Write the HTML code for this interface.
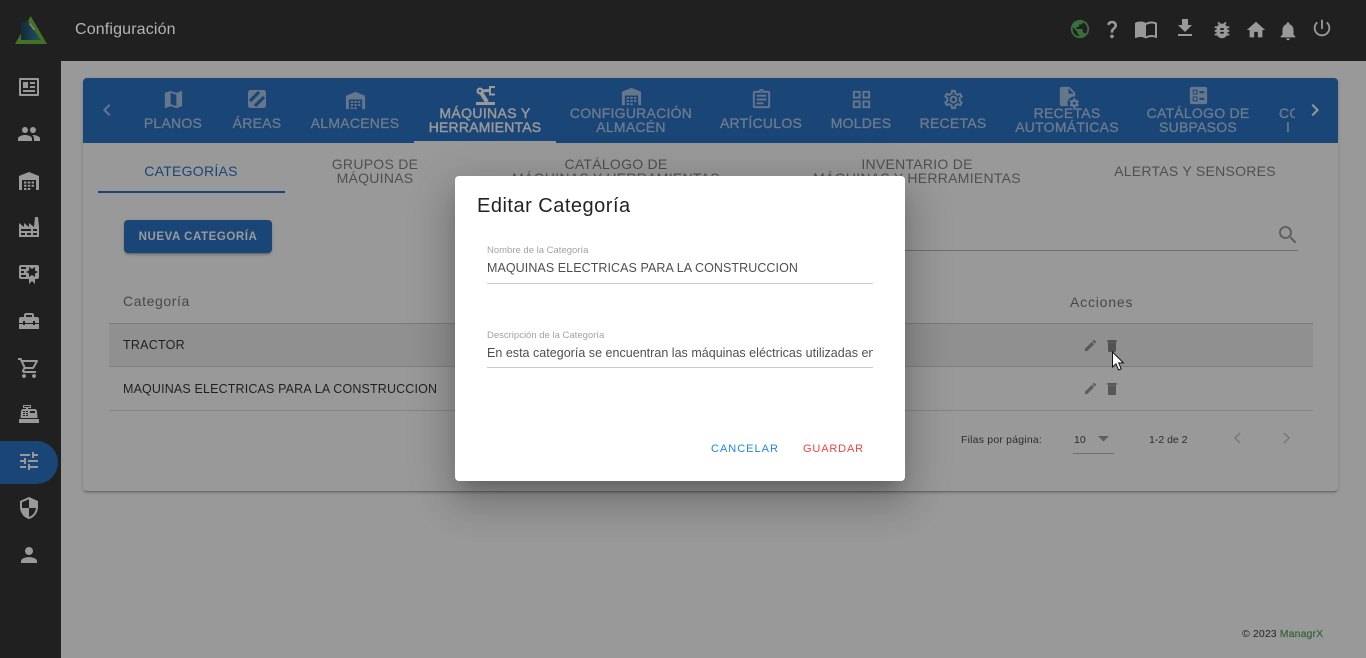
<!DOCTYPE html>
<html lang="es"><head><meta charset="utf-8"><title>Configuración</title>
<style>
*{box-sizing:border-box}
html,body{margin:0;padding:0;width:1366px;height:658px;overflow:hidden;background:#fff;font-family:"Liberation Sans",sans-serif}
.t{position:absolute;white-space:nowrap;line-height:14px}
.c{transform:translateX(-50%);text-align:center}
svg{position:absolute;display:block}
.tab{color:rgba(255,255,255,.6);font-size:14px;letter-spacing:.25px;font-weight:400;-webkit-text-stroke:.25px currentColor}
.sub{color:rgba(0,0,0,.54);font-size:14px;letter-spacing:.27px}
.w{fill:#fff}
.wt{fill:rgba(255,255,255,.6)}
.g{fill:rgba(0,0,0,.42)}
.d{fill:rgba(0,0,0,.48)}
</style></head><body>
<div style="position:absolute;left:0;top:0;width:1366px;height:61px;background:#212121"></div>
<div style="position:absolute;left:0;top:0;width:61px;height:658px;background:#212121"></div>

<svg style="left:14px;top:15px" width="34" height="30" viewBox="0 0 34 30"><defs><linearGradient id="lg" x1="0" y1="0" x2="1" y2="0"><stop offset="0" stop-color="#0a2f4e"/><stop offset="1" stop-color="#1d8296"/></linearGradient></defs><path d="M16.7 1 33 29H1z" fill="#62b52b"/><path d="M7 7.5 14 6 27 25H7z" fill="url(#lg)"/><path d="M16 8l5 6.5-1 1-5-6.500z" fill="#ddd"/></svg>

<svg class="w" style="left:1069px;top:18px;fill:#4caf50" width="22" height="22" viewBox="0 0 24 24"><path d="M12 2C6.48 2 2 6.48 2 12s4.48 10 10 10 10-4.48 10-10S17.52 2 12 2zm-1 17.93c-3.95-.49-7-3.85-7-7.93 0-.62.08-1.21.21-1.79L9 15v1c0 1.1.9 2 2 2v1.93zm6.9-2.54c-.26-.81-1-1.39-1.9-1.39h-1v-3c0-.55-.45-1-1-1H8v-2h2c.55 0 1-.45 1-1V7h2c1.1 0 2-.9 2-2v-.41c2.93 1.19 5 4.06 5 7.41 0 2.08-.8 3.97-2.1 5.39z"/></svg>
<svg class="w" style="left:1101px;top:18px" width="22" height="22" viewBox="0 0 24 24"><path d="M11.07 12.85c.77-1.39 2.25-2.21 3.11-3.44.91-1.29.4-3.7-2.18-3.7-1.69 0-2.52 1.28-2.87 2.34L6.54 6.96C7.25 4.83 9.18 3 11.99 3c2.35 0 3.96 1.07 4.78 2.41.7 1.15 1.11 3.3.03 4.9-1.2 1.77-2.35 2.31-2.97 3.45-.25.46-.35.76-.35 2.24h-2.89c-.01-.78-.13-2.05.48-3.15zM14 20c0 1.1-.9 2-2 2s-2-.9-2-2 .9-2 2-2 2 .9 2 2z"/></svg>
<svg class="w" style="left:1134px;top:17px" width="24" height="24" viewBox="0 0 24 24"><path d="M12,21.5C10.65,20.65 8.2,20 6.5,20C4.85,20 3.15,20.3 1.75,21.05C1.65,21.1 1.6,21.1 1.5,21.1C1.25,21.1 1,20.85 1,20.6V6C1.6,5.55 2.25,5.25 3,5C4.11,4.65 5.33,4.5 6.5,4.5C8.45,4.5 10.55,4.9 12,6C13.45,4.9 15.55,4.5 17.5,4.5C18.67,4.5 19.89,4.65 21,5C21.75,5.25 22.4,5.55 23,6V20.6C23,20.85 22.75,21.1 22.5,21.1C22.4,21.1 22.35,21.1 22.25,21.05C20.85,20.3 19.15,20 17.5,20C15.8,20 13.35,20.65 12,21.5M12,8V19.5C13.35,18.65 15.8,18 17.5,18C18.7,18 19.9,18.15 21,18.5V7C19.9,6.65 18.7,6.5 17.5,6.5C15.8,6.5 13.35,7.15 12,8Z"/></svg>
<svg class="w" style="left:1173px;top:16px" width="24" height="24" viewBox="0 0 24 24"><path d="M19 9h-4V3H9v6H5l7 7 7-7zM5 18v2h14v-2H5z"/></svg>
<svg class="w" style="left:1211px;top:19px" width="22" height="22" viewBox="0 0 24 24"><path d="M20 8h-2.81c-.45-.78-1.07-1.45-1.82-1.96L17 4.41 15.59 3l-2.17 2.17C12.96 5.06 12.49 5 12 5c-.49 0-.96.06-1.41.17L8.41 3 7 4.41l1.62 1.63C7.88 6.55 7.26 7.22 6.81 8H4v2h2.09c-.05.33-.09.66-.09 1v1H4v2h2v1c0 .34.04.67.09 1H4v2h2.81c1.04 1.79 2.97 3 5.19 3s4.15-1.21 5.19-3H20v-2h-2.09c.05-.33.09-.66.09-1v-1h2v-2h-2v-1c0-.34-.04-.67-.09-1H20V8zm-6 8h-4v-2h4v2zm0-4h-4v-2h4v2z"/></svg>
<svg class="w" style="left:1245px;top:19px" width="22" height="22" viewBox="0 0 24 24"><path d="M10 20v-6h4v6h5v-8h3L12 3 2 12h3v8z"/></svg>
<svg class="w" style="left:1277px;top:20px" width="22" height="22" viewBox="0 0 24 24"><path d="M12 22c1.1 0 2-.9 2-2h-4c0 1.1.89 2 2 2zm6-6v-5c0-3.07-1.64-5.64-4.5-6.32V4c0-.83-.67-1.5-1.5-1.5s-1.5.67-1.5 1.5v.68C7.63 5.36 6 7.92 6 11v5l-2 2v1h16v-1l-2-2z"/></svg>
<svg class="w" style="left:1311px;top:17px" width="22" height="22" viewBox="0 0 24 24"><path d="M13 3h-2v10h2V3zm4.83 2.17l-1.42 1.42C17.99 7.86 19 9.81 19 12c0 3.87-3.13 7-7 7s-7-3.13-7-7c0-2.19 1.01-4.14 2.58-5.42L6.17 5.17C4.23 6.82 3 9.26 3 12c0 4.97 4.03 9 9 9s9-4.03 9-9c0-2.74-1.23-5.18-3.17-6.83z"/></svg>

<div style="position:absolute;left:0;top:441px;width:58px;height:43px;background:#1565c0;border-radius:0 22px 22px 0"></div>
<svg class="w" style="left:17px;top:75px" width="24" height="24" viewBox="0 0 24 24"><path fill-rule="evenodd" d="M3 3h18a1 1 0 0 1 1 1v16a1 1 0 0 1-1 1H3a1 1 0 0 1-1-1V4a1 1 0 0 1 1-1zm1 2v14h16V5H4zm2 2h5v6H6V7zm7 0h5v2h-5V7zm0 4h5v2h-5v-2zm-7 4h12v2H6v-2z"/></svg>
<svg class="w" style="left:17px;top:122px" width="24" height="24" viewBox="0 0 24 24"><path d="M16 11c1.66 0 2.99-1.34 2.99-3S17.66 5 16 5c-1.66 0-3 1.34-3 3s1.34 3 3 3zm-8 0c1.66 0 2.99-1.34 2.99-3S9.66 5 8 5C6.34 5 5 6.34 5 8s1.34 3 3 3zm0 2c-2.33 0-7 1.17-7 3.5V19h14v-2.500c0-2.33-4.67-3.5-7-3.5zm8 0c-.29 0-.62.02-.97.05 1.16.84 1.97 1.97 1.97 3.45V19h6v-2.500c0-2.33-4.67-3.5-7-3.5z"/></svg>
<svg class="w" style="left:17px;top:169px" width="24" height="24" viewBox="0 0 24 24"><path d="M12 3 2 7v14h3V11h14v10h3V7zM7 12.500h2.500v2H7zM10.800 12.500h2.500v2h-2.500zM14.600 12.500H17v2h-2.400zM7 15.800h2.500v2H7zM10.800 15.800h2.500v2h-2.500zM14.600 15.800H17v2h-2.400zM7 19h2.500v2H7zM10.800 19h2.500v2h-2.500z"/></svg>
<svg class="w" style="left:17px;top:215px" width="24" height="24" viewBox="0 0 24 24"><path d="M4,18V20H8V18H4M4,14V16H14V14H4M10,18V20H14V18H10M16,14V16H20V14H16M16,18V20H20V18H16M2,22V8L7,12V8L12,12V8L17,12L18,2H21L22,12V22H2Z"/></svg>
<svg class="w" style="left:17px;top:262px" width="24" height="24" viewBox="0 0 24 24"><path d="M4,3C2.89,3 2,3.89 2,5V15A2,2 0 0,0 4,17H12V22L15,19L18,22V17H20A2,2 0 0,0 22,15V8L22,6V5A2,2 0 0,0 20,3H16V3H4M12,5L15,7L18,5V8.5L21,10L18,11.5V15L15,13L12,15V11.5L9,10L12,8.5V5M4,5H9V7H4V5M4,9H7V11H4V9M4,13H9V15H4V13Z"/></svg>
<svg class="w" style="left:17px;top:309px" width="24" height="24" viewBox="0 0 24 24"><path d="M18 16H16V15H8V16H6V15H2V20H22V15H18V16M20 8H17V6C17 4.9 16.1 4 15 4H9C7.9 4 7 4.9 7 6V8H4C2.9 8 2 8.9 2 10V14H6V12H8V14H16V12H18V14H22V10C22 8.9 21.1 8 20 8M15 8H9V6H15V8Z"/></svg>
<svg class="w" style="left:17px;top:356px" width="24" height="24" viewBox="0 0 24 24"><path d="M15.55 13c.75 0 1.41-.41 1.75-1.03l3.58-6.49c.37-.66-.11-1.48-.87-1.48H5.21l-.94-2H1v2h2l3.6 7.59-1.35 2.44C4.52 15.37 5.48 17 7 17h12v-2H7l1.1-2h7.45zM6.16 6h12.15l-2.76 5H8.53L6.16 6zM7 18c-1.1 0-1.99.9-1.99 2S5.9 22 7 22s2-.9 2-2-.9-2-2-2zm10 0c-1.1 0-1.99.9-1.99 2s.89 2 1.99 2 2-.9 2-2-.9-2-2-2z"/></svg>
<svg class="w" style="left:17px;top:402px" width="24" height="24" viewBox="0 0 24 24"><path d="M2,17H22V21H2V17M6.25,7H9V6H6V3H14V6H11V7H17.8C18.8,7 19.8,8 20,9L20.5,16H3.5L4.05,9C4.05,8 5.05,7 6.25,7M13,9V11H18V9H13M6,9V10H8V9H6M9,9V10H11V9H9M6,11V12H8V11H6M9,11V12H11V11H9M6,13V14H8V13H6M9,13V14H11V13H9M7,4V5H13V4H7Z"/></svg>
<svg class="w" style="left:17px;top:449px" width="24" height="24" viewBox="0 0 24 24"><path d="M3 17v2h6v-2H3zM3 5v2h10V5H3zm10 16v-2h8v-2h-8v-2h-2v6h2zM7 9v2H3v2h4v2h2V9H7zm14 4v-2H11v2h10zm-6-4h2V7h4V5h-4V3h-2v6z"/></svg>
<svg class="w" style="left:17px;top:496px" width="24" height="24" viewBox="0 0 24 24"><path d="M12 1L3 5v6c0 5.55 3.84 10.74 9 12 5.16-1.26 9-6.45 9-12V5l-9-4zm0 10.99h7c-.53 4.12-3.28 7.79-7 8.94V12H5V6.3l7-3.11v8.8z"/></svg>
<svg class="w" style="left:17px;top:543px" width="24" height="24" viewBox="0 0 24 24"><path d="M12 12c2.21 0 4-1.79 4-4s-1.79-4-4-4-4 1.79-4 4 1.79 4 4 4zm0 2c-2.67 0-8 1.34-8 4v2h16v-2c0-2.66-5.33-4-8-4z"/></svg>

<!-- card -->
<div style="position:absolute;left:83px;top:78px;width:1255px;height:413px;background:#fff;border-radius:4px;box-shadow:0 3px 1px -2px rgba(0,0,0,.2),0 2px 2px 0 rgba(0,0,0,.14),0 1px 5px 0 rgba(0,0,0,.12)"></div>
<div style="position:absolute;left:83px;top:78px;width:1255px;height:65px;background:#1565c0;border-radius:4px 4px 0 0"></div>
<svg class="wt" style="left:95px;top:98px" width="24" height="24" viewBox="0 0 24 24"><path d="M15.41 7.41L14 6l-6 6 6 6 1.41-1.41L10.83 12z"/></svg>
<svg class="w" style="left:1303px;top:98px" width="24" height="24" viewBox="0 0 24 24"><path d="M10 6L8.59 7.41 13.17 12l-4.58 4.59L10 18l6-6z"/></svg>

<svg class="wt" style="left:162px;top:88px" width="23" height="23" viewBox="0 0 24 24"><path d="M20.5 3l-.16.03L15 5.1 9 3 3.36 4.9c-.21.07-.36.25-.36.48V20.5c0 .28.22.5.5.5l.16-.03L9 18.9l6 2.1 5.64-1.9c.21-.07.36-.25.36-.48V3.5c0-.28-.22-.5-.5-.5zM15 19l-6-2.11V5l6 2.11V19z"/></svg>
<div class="t c tab" style="left:173px;top:116px">PLANOS</div>
<svg style="left:245px;top:87px" width="24" height="24" viewBox="0 0 24 24"><rect x="3" y="3" width="18" height="18" rx="2.500" fill="#a1c1e6"/><path d="M5 14 14 5M10 19 19 10" stroke="#1565c0" stroke-width="3.200" fill="none"/></svg>
<div class="t c tab" style="left:257px;top:116px">ÁREAS</div>
<svg class="wt" style="left:344px;top:89px" width="23" height="23" viewBox="0 0 24 24"><path d="M12 3 2 7v14h3V11h14v10h3V7zM7 12.500h2.500v2H7zM10.800 12.500h2.500v2h-2.500zM14.600 12.500H17v2h-2.400zM7 15.800h2.500v2H7zM10.800 15.800h2.500v2h-2.500zM14.600 15.800H17v2h-2.400zM7 19h2.500v2H7zM10.800 19h2.500v2h-2.500z"/></svg>
<div class="t c tab" style="left:355px;top:116px">ALMACENES</div>

<svg style="left:475px;top:85px" width="21" height="21" viewBox="0 0 21 21"><path d="M1 17h19v3H1z" fill="#fff"/><path d="M5 6 12 17" stroke="#fff" stroke-width="4" fill="none"/><path d="M5 6 14 5.500" stroke="#fff" stroke-width="3" fill="none"/><circle cx="5" cy="6" r="3.500" fill="#fff"/><circle cx="5" cy="6" r="1.200" fill="#1565c0"/><path d="M20 2h-5v7.500h5" stroke="#fff" stroke-width="2" fill="none"/></svg>
<div class="t c tab" style="left:485px;top:106px;color:#fff;-webkit-text-stroke:.4px currentColor;letter-spacing:.35px">MÁQUINAS Y</div>
<div class="t c tab" style="left:485px;top:120px;color:#fff;-webkit-text-stroke:.4px currentColor;letter-spacing:.2px">HERRAMIENTAS</div>
<div style="position:absolute;left:414px;top:141px;width:142px;height:2px;background:#fff"></div>

<svg class="wt" style="left:620px;top:85px" width="23" height="23" viewBox="0 0 24 24"><path d="M12 3 2 7v14h3V11h14v10h3V7zM7 12.500h2.500v2H7zM10.800 12.500h2.500v2h-2.500zM14.600 12.500H17v2h-2.400zM7 15.800h2.500v2H7zM10.800 15.800h2.500v2h-2.500zM14.600 15.800H17v2h-2.400zM7 19h2.500v2H7zM10.800 19h2.500v2h-2.500z"/></svg>
<div class="t c tab" style="left:631px;top:106px">CONFIGURACIÓN</div>
<div class="t c tab" style="left:631px;top:120px">ALMACÉN</div>
<svg class="wt" style="left:750px;top:88px" width="23" height="23" viewBox="0 0 24 24"><path d="M7 15h7v2H7zm0-4h10v2H7zm0-4h10v2H7zm12-4h-4.18C14.4 1.84 13.3 1 12 1c-1.3 0-2.4.84-2.82 2H5c-.14 0-.27.01-.4.04-.39.08-.74.28-1.01.55-.18.18-.33.4-.43.64-.1.23-.16.49-.16.77v14c0 .27.06.54.16.78s.25.45.43.64c.27.27.62.47 1.01.55.13.02.26.03.4.03h14c1.1 0 2-.9 2-2V5c0-1.1-.9-2-2-2zm-7-.25c.41 0 .75.34.75.75s-.34.75-.75.75-.75-.34-.75-.75.34-.75.75-.75zM19 19H5V5h14v14z"/></svg>
<div class="t c tab" style="left:761px;top:116px">ARTÍCULOS</div>
<svg class="wt" style="left:850px;top:88px" width="23" height="23" viewBox="0 0 24 24"><path d="M3 3v8h8V3H3zm6 6H5V5h4v4zm-6 4v8h8v-8H3zm6 6H5v-4h4v4zm4-16v8h8V3h-8zm6 6h-4V5h4v4zm-6 4v8h8v-8h-8zm6 6h-4v-4h4v4z"/></svg>
<div class="t c tab" style="left:861px;top:116px">MOLDES</div>
<svg class="wt" style="left:942px;top:88px" width="23" height="23" viewBox="0 0 24 24"><path fill-rule="evenodd" d="M19.43 12.98c.04-.32.07-.64.07-.98 0-.34-.03-.66-.07-.98l2.11-1.65c.19-.15.24-.42.12-.64l-2-3.46c-.09-.16-.26-.25-.44-.25-.06 0-.12.01-.17.03l-2.49 1c-.52-.4-1.08-.73-1.69-.98l-.38-2.65C14.46 2.18 14.25 2 14 2h-4c-.25 0-.46.18-.49.42l-.38 2.65c-.61.25-1.17.59-1.69.98l-2.49-1c-.06-.02-.12-.03-.18-.03-.17 0-.34.09-.43.25l-2 3.46c-.13.22-.07.49.12.64l2.11 1.65c-.04.32-.07.65-.07.98 0 .33.03.66.07.98l-2.11 1.65c-.19.15-.24.42-.12.64l2 3.46c.09.16.26.25.44.25.06 0 .12-.01.17-.03l2.49-1c.52.4 1.08.73 1.69.98l.38 2.65c.03.24.24.42.49.42h4c.25 0 .46-.18.49-.42l.38-2.65c.61-.25 1.17-.59 1.69-.98l2.49 1c.06.02.12.03.18.03.17 0 .34-.09.43-.25l2-3.46c.12-.22.07-.49-.12-.64l-2.11-1.65zm-1.98-1.71c.04.31.05.52.05.73 0 .21-.02.43-.05.73l-.14 1.13.89.7 1.08.84-.7 1.21-1.27-.51-1.04-.42-.9.68c-.43.32-.84.56-1.25.73l-1.06.43-.16 1.13-.2 1.35h-1.4l-.19-1.35-.16-1.13-1.06-.43c-.43-.18-.83-.41-1.23-.71l-.91-.7-1.06.43-1.27.51-.7-1.21 1.08-.84.89-.7-.14-1.13c-.03-.31-.05-.54-.05-.74s.02-.43.05-.73l.14-1.13-.89-.7-1.08-.84.7-1.21 1.27.51 1.04.42.9-.68c.43-.32.84-.56 1.25-.73l1.06-.43.16-1.13.2-1.35h1.39l.19 1.35.16 1.13 1.06.43c.43.18.83.41 1.23.71l.91.7 1.06-.43 1.27-.51.7 1.21-1.07.85-.89.7.14 1.13zM12 8c-2.21 0-4 1.79-4 4s1.79 4 4 4 4-1.79 4-4-1.79-4-4-4zm0 6c-1.1 0-2-.9-2-2s.9-2 2-2 2 .9 2 2-.9 2-2 2z"/></svg>
<div class="t c tab" style="left:953px;top:116px">RECETAS</div>
<svg class="wt" style="left:1056px;top:85px" width="23" height="23" viewBox="0 0 24 24"><path d="M6 2C4.89 2 4 2.9 4 4V20A2 2 0 0 0 6 22H12.68A7 7 0 0 1 12 19A7 7 0 0 1 19 12A7 7 0 0 1 20 12.08V8L14 2H6M13 3.5L18.5 9H13V3.5M18 14C17.87 14 17.76 14.09 17.74 14.21L17.55 15.53C17.25 15.66 16.96 15.82 16.7 16L15.46 15.5C15.35 15.5 15.22 15.5 15.15 15.63L14.15 17.36C14.09 17.47 14.11 17.6 14.21 17.68L15.27 18.5C15.25 18.67 15.24 18.83 15.24 19C15.24 19.17 15.25 19.33 15.27 19.5L14.21 20.32C14.12 20.4 14.09 20.53 14.15 20.64L15.15 22.37C15.21 22.5 15.34 22.5 15.46 22.5L16.7 22C16.96 22.18 17.24 22.35 17.55 22.47L17.74 23.79C17.76 23.91 17.86 24 18 24H20C20.11 24 20.22 23.91 20.24 23.79L20.43 22.47C20.73 22.34 21 22.18 21.27 22L22.5 22.5C22.63 22.5 22.76 22.5 22.83 22.37L23.83 20.64C23.89 20.53 23.86 20.4 23.77 20.32L22.7 19.5C22.72 19.33 22.74 19.17 22.74 19C22.74 18.83 22.73 18.67 22.7 18.5L23.76 17.68C23.85 17.6 23.88 17.47 23.82 17.36L22.82 15.63C22.76 15.5 22.63 15.5 22.5 15.5L21.27 16C21 15.82 20.73 15.65 20.42 15.53L20.23 14.21C20.22 14.09 20.11 14 20 14H18M19 17.5C19.83 17.5 20.5 18.17 20.5 19C20.5 19.83 19.83 20.5 19 20.5C18.16 20.5 17.5 19.83 17.5 19C17.5 18.17 18.17 17.5 19 17.5Z"/></svg>
<div class="t c tab" style="left:1067px;top:106px">RECETAS</div>
<div class="t c tab" style="left:1067px;top:120px">AUTOMÁTICAS</div>
<svg class="wt" style="left:1187px;top:84px" width="23" height="23" viewBox="0 0 24 24"><path fill-rule="evenodd" d="M13 9.5h5v-2h-5v2zm0 7h5v-2h-5v2zm6 4.5H5c-1.1 0-2-.9-2-2V5c0-1.1.9-2 2-2h14c1.1 0 2 .9 2 2v14c0 1.1-.9 2-2 2zM6 11h5V6H6v5zm1-4h3v3H7V7zM6 18h5v-5H6v5zm1-4h3v3H7v-3z"/></svg>
<div class="t c tab" style="left:1198px;top:106px">CATÁLOGO DE</div>
<div class="t c tab" style="left:1198px;top:120px">SUBPASOS</div>
<div class="t tab" style="left:1279px;top:106px;width:16px;overflow:hidden">CONFIG</div>
<div class="t tab" style="left:1286px;top:120px;width:5px;overflow:hidden">ID</div>

<!-- sub tabs -->
<div class="t c sub" style="left:191px;top:164px;color:#1565c0">CATEGORÍAS</div>
<div style="position:absolute;left:98px;top:191px;width:187px;height:2px;background:#1565c0"></div>
<div class="t c sub" style="left:375px;top:157px">GRUPOS DE</div>
<div class="t c sub" style="left:375px;top:171px">MÁQUINAS</div>
<div class="t c sub" style="left:616px;top:157px">CATÁLOGO DE</div>
<div class="t c sub" style="left:616px;top:171px">MÁQUINAS Y HERRAMIENTAS</div>
<div class="t c sub" style="left:917px;top:157px">INVENTARIO DE</div>
<div class="t c sub" style="left:917px;top:171px">MÁQUINAS Y HERRAMIENTAS</div>
<div class="t c sub" style="left:1195px;top:164px">ALERTAS Y SENSORES</div>

<div style="position:absolute;left:124px;top:220px;width:148px;height:33px;background:#1565c0;border-radius:4px;box-shadow:0 3px 1px -2px rgba(0,0,0,.2),0 2px 2px 0 rgba(0,0,0,.14),0 1px 5px 0 rgba(0,0,0,.12)"></div>
<div class="t c" style="left:198px;top:230px;font-size:11.5px;font-weight:700;letter-spacing:.56px;color:#fff">NUEVA CATEGORÍA</div>

<div style="position:absolute;left:900px;top:250px;width:398px;height:1px;background:rgba(0,0,0,.3)"></div>
<svg class="g" style="left:1276px;top:223px" width="24" height="24" viewBox="0 0 24 24"><path d="M15.5 14h-.79l-.28-.27C15.41 12.59 16 11.11 16 9.5 16 5.91 13.09 3 9.5 3S3 5.91 3 9.5 5.91 16 9.5 16c1.61 0 3.09-.59 4.23-1.57l.27.28v.79l5 4.99L20.49 19l-4.99-5zm-6 0C7.01 14 5 11.99 5 9.5S7.01 5 9.5 5 14 7.01 14 9.5 11.99 14 9.5 14z"/></svg>

<div class="t" style="left:123px;top:294px;font-size:14px;color:rgba(0,0,0,.6);letter-spacing:.6px">Categoría</div>
<div class="t" style="left:1070px;top:295px;font-size:14px;color:rgba(0,0,0,.6);letter-spacing:.8px">Acciones</div>
<div style="position:absolute;left:109px;top:323px;width:1204px;height:44px;background:#eee;border-top:1px solid #c8c8c8;border-bottom:1px solid #d0d0d0"></div>
<div style="position:absolute;left:109px;top:410px;width:1204px;height:1px;background:#d8d8d8"></div>
<div class="t" style="left:123px;top:338px;font-size:12.5px;color:rgba(0,0,0,.87);letter-spacing:.25px">TRACTOR</div>
<div class="t" style="left:123px;top:382px;font-size:12.5px;color:rgba(0,0,0,.87);letter-spacing:.15px">MAQUINAS ELECTRICAS PARA LA CONSTRUCCION</div>
<svg class="g" style="left:1083px;top:338px" width="15" height="15" viewBox="0 0 24 24"><path d="M3 17.25V21h3.75L17.81 9.94l-3.75-3.75L3 17.25zM20.71 7.04c.39-.39.39-1.02 0-1.41l-2.34-2.34c-.39-.39-1.02-.39-1.41 0l-1.83 1.83 3.75 3.75 1.83-1.83z"/></svg>
<svg class="d" style="left:1104px;top:338px" width="16" height="16" viewBox="0 0 24 24"><path d="M6 7h12v12c0 1.1-.9 2-2 2H8c-1.1 0-2-.9-2-2zM5 3h14v3.500H5z"/></svg>
<svg class="g" style="left:1083px;top:381px" width="15" height="15" viewBox="0 0 24 24"><path d="M3 17.25V21h3.75L17.81 9.94l-3.75-3.75L3 17.25zM20.71 7.04c.39-.39.39-1.02 0-1.41l-2.34-2.34c-.39-.39-1.02-.39-1.41 0l-1.83 1.83 3.75 3.75 1.83-1.83z"/></svg>
<svg class="d" style="left:1104px;top:381px" width="16" height="16" viewBox="0 0 24 24"><path d="M6 7h12v12c0 1.1-.9 2-2 2H8c-1.1 0-2-.9-2-2zM5 3h14v3.500H5z"/></svg>

<div class="t" style="left:961px;top:433px;font-size:10.5px;color:rgba(0,0,0,.8);letter-spacing:.2px">Filas por página:</div>
<div class="t" style="left:1074px;top:433px;font-size:10.5px;color:rgba(0,0,0,.8)">10</div>
<svg style="left:1098px;top:436px" width="11" height="6" viewBox="0 0 11 6"><path d="M0 0h11L5.500 5.500z" fill="rgba(0,0,0,.42)"/></svg>
<div style="position:absolute;left:1073px;top:453px;width:41px;height:1px;background:rgba(0,0,0,.3)"></div>
<div class="t" style="left:1149px;top:433px;font-size:10.5px;color:rgba(0,0,0,.8)">1-2 de 2</div>
<svg style="left:1225px;top:426px" width="24" height="24" viewBox="0 0 24 24"><path d="M15 7l-5 5 5 5" fill="none" stroke="rgba(0,0,0,.26)" stroke-width="1.400"/></svg>
<svg style="left:1275px;top:426px" width="24" height="24" viewBox="0 0 24 24"><path d="M9 7l5 5-5 5" fill="none" stroke="rgba(0,0,0,.26)" stroke-width="1.400"/></svg>

<div class="t" style="left:1242px;top:627px;font-size:10.5px;color:rgba(0,0,0,.87);letter-spacing:.12px">© 2023 <span style="color:#43a047;-webkit-text-stroke:.2px #43a047">ManagrX</span></div>

<!-- overlay -->
<div style="position:absolute;left:0;top:0;width:1366px;height:658px;background:rgba(33,33,33,.46)"></div>

<div class="t" style="left:75px;top:21px;font-size:16px;line-height:18px;color:#b4b4b4;letter-spacing:.15px">Configuración</div>

<!-- cursor -->
<svg style="left:1111px;top:351px" width="14" height="21" viewBox="0 0 14 21"><path d="M1.500 1v15l3.500-3.200 2.600 6.200 2.600-1.100-2.600-6h4.800z" fill="#fff" stroke="#111" stroke-width="1"/></svg>

<!-- dialog -->
<div style="position:absolute;left:455px;top:176px;width:450px;height:305px;background:#fff;border-radius:4px;box-shadow:0 11px 15px -7px rgba(0,0,0,.2),0 24px 38px 3px rgba(0,0,0,.14),0 9px 46px 8px rgba(0,0,0,.12)"></div>
<div class="t" style="left:477px;top:195px;font-size:20px;line-height:23px;color:rgba(0,0,0,.87);letter-spacing:.5px">Editar Categoría</div>
<div class="t" style="left:487px;top:245px;font-size:9.5px;line-height:11px;color:rgba(0,0,0,.38)">Nombre de la Categoría</div>
<div class="t" style="left:487px;top:261px;font-size:12.5px;color:rgba(0,0,0,.7);letter-spacing:.07px">MAQUINAS ELECTRICAS PARA LA CONSTRUCCION</div>
<div style="position:absolute;left:487px;top:283px;width:386px;height:1px;background:rgba(0,0,0,.2)"></div>
<div class="t" style="left:487px;top:330px;font-size:9.5px;line-height:11px;color:rgba(0,0,0,.38)">Descripción de la Categoría</div>
<div class="t" style="left:487px;top:346px;width:386px;overflow:hidden;font-size:12.5px;color:rgba(0,0,0,.7);letter-spacing:.02px">En esta categoría se encuentran las máquinas eléctricas utilizadas en la construcción</div>
<div style="position:absolute;left:487px;top:367px;width:386px;height:1px;background:rgba(0,0,0,.2)"></div>
<div class="t" style="left:711px;top:442px;font-size:11px;letter-spacing:1px;color:#1e88e5">CANCELAR</div>
<div class="t" style="left:803px;top:442px;font-size:11px;letter-spacing:.85px;color:#f44336">GUARDAR</div>
</body></html>
